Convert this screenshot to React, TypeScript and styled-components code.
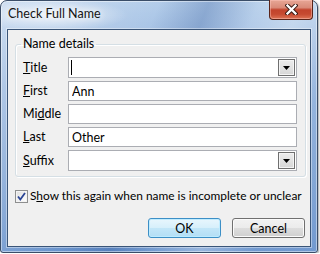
import styled, { createGlobalStyle } from 'styled-components'

const GlobalStyle = createGlobalStyle`
  html, body {
    margin: 0;
    padding: 0;
    background: #ffffff;
  }
  body {
    font-family: Lato, 'Noto Sans', sans-serif;
    font-size: 12px;
    color: #000;
  }
`

type Field = {
  label: string
  key: number
  value?: string
  combo?: boolean
  caret?: boolean
}

const fields: Field[] = [
  { label: 'Title', key: 0, combo: true, caret: true },
  { label: 'First', key: 0, value: 'Ann' },
  { label: 'Middle', key: 2 },
  { label: 'Last', key: 0, value: 'Other' },
  { label: 'Suffix', key: 0, combo: true },
]

function AccessKey({ text, at }: { text: string; at: number }) {
  return (
    <>
      {text.slice(0, at)}
      <u>{text[at]}</u>
      {text.slice(at + 1)}
    </>
  )
}

export default function App() {
  return (
    <>
      <GlobalStyle />
      <Window>
        <TitleBar>
          <Caption>Check Full Name</Caption>
          <CloseButton>
            <svg width="13" height="11" viewBox="0 0 13 11">
              <path d="M2.5 1.5 L10.5 9.5 M10.5 1.5 L2.5 9.5" stroke="#3a1a14" strokeWidth="4.2" strokeLinecap="square" />
              <path d="M2.5 1.5 L10.5 9.5 M10.5 1.5 L2.5 9.5" stroke="#ffffff" strokeWidth="2.3" strokeLinecap="square" />
            </svg>
          </CloseButton>
        </TitleBar>
        <Client>
          <Group>
            <Legend>Name details</Legend>
            <Grid>
              {fields.map((f) => (
                <Row key={f.label}>
                  <Label>
                    <AccessKey text={f.label} at={f.key} />
                  </Label>
                  {f.combo ? (
                    <Combo>
                      <ComboText>{f.caret && <Caret />}</ComboText>
                      <DropButton>
                        <svg width="7" height="4" viewBox="0 0 7 4">
                          <polygon points="0,0 7,0 3.5,4" fill="#000" />
                        </svg>
                      </DropButton>
                    </Combo>
                  ) : (
                    <TextBox readOnly defaultValue={f.value ?? ''} />
                  )}
                </Row>
              ))}
            </Grid>
          </Group>
          <CheckRow>
            <CheckBox>
              <svg width="11" height="11" viewBox="0 0 11 11">
                <path d="M2 5.5 L4.3 8.5 L9 2" fill="none" stroke="#2b4595" strokeWidth="1.8" />
              </svg>
            </CheckBox>
            <CheckText>
              <AccessKey text="Show this again when name is incomplete or unclear" at={1} />
            </CheckText>
          </CheckRow>
          <Buttons>
            <Button $primary>OK</Button>
            <Button>Cancel</Button>
          </Buttons>
        </Client>
      </Window>
    </>
  )
}

const Window = styled.div`
  box-sizing: border-box;
  width: 318px;
  height: 253px;
  display: flex;
  flex-direction: column;
  padding: 0 6px 5px 6px;
  border: 1px solid #3a4d68;
  border-radius: 7px 7px 3px 3px;
  box-shadow: inset 0 0 0 1px rgba(255, 255, 255, 0.45), 1px 1px 2px rgba(0, 0, 0, 0.35);
  background:
    radial-gradient(ellipse 75px 16px at 52px 14px, rgba(255, 255, 255, 0.75), rgba(255, 255, 255, 0)),
    linear-gradient(112deg, rgba(255, 255, 255, 0.35) 0%, rgba(255, 255, 255, 0) 38%, rgba(30, 70, 140, 0.25) 50%, rgba(255, 255, 255, 0.1) 62%, rgba(255, 255, 255, 0.3) 72%, rgba(255, 255, 255, 0.05) 85%),
    linear-gradient(to bottom, #b4cdea 0%, #92b3dd 35%, #7ea3d4 70%, #6a94cd 100%);
`

const TitleBar = styled.div`
  height: 28px;
  display: flex;
  align-items: flex-start;
  justify-content: space-between;
`

const Caption = styled.span`
  margin-top: 5px;
  padding-left: 1px;
  font-size: 12.5px;
  line-height: 16px;
  color: #141414;
  text-shadow: 0 0 6px rgba(255, 255, 255, 0.9), 0 0 10px rgba(255, 255, 255, 0.7);
`

const CloseButton = styled.div`
  box-sizing: border-box;
  width: 44px;
  height: 20px;
  margin: -1px -2px 0 0;
  display: flex;
  align-items: center;
  justify-content: center;
  border: 1px solid #5a2419;
  border-top: none;
  border-radius: 0 0 4px 4px;
  box-shadow: inset 0 0 0 1px rgba(255, 200, 190, 0.45);
  background: linear-gradient(to bottom, #e7a796 0%, #d98a78 40%, #c2432c 52%, #c64a31 75%, #dd7456 100%);
`

const Client = styled.div`
  flex: 1;
  display: flex;
  flex-direction: column;
  padding: 6px 4px 0 7px;
  background: #f0f0f0;
  border: 1px solid #3a5578;
  box-shadow: 0 0 0 1px rgba(255, 255, 255, 0.4);
`

const Group = styled.fieldset`
  margin: 0;
  padding: 5px 8px 5px 7px;
  border: 1px solid #d5dfe5;
  border-radius: 3px;
  box-shadow: inset 1px 1px 0 #ffffff, 1px 1px 0 #ffffff;
`

const Legend = styled.legend`
  margin-left: -2px;
  padding: 0 2px;
  line-height: 16px;
  font-size: 12.5px;
`

const Grid = styled.div`
  display: grid;
  row-gap: 3px;
`

const Row = styled.div`
  display: grid;
  grid-template-columns: 45px 1fr;
  align-items: center;
`

const Label = styled.span`
  line-height: 16px;
  font-size: 12.5px;
`

const TextBox = styled.input`
  box-sizing: border-box;
  width: 100%;
  height: 20px;
  margin: 0;
  padding: 0 3px;
  border: 1px solid #abadb3;
  background: #fff;
  font: inherit;
  font-size: 12.5px;
  color: #000;
  outline: none;
`

const Combo = styled.div`
  box-sizing: border-box;
  height: 21px;
  display: flex;
  padding: 1px;
  border: 1px solid #abadb3;
  background: #fff;
`

const ComboText = styled.div`
  flex: 1;
  display: flex;
  align-items: center;
  padding-left: 1px;
`

const Caret = styled.span`
  width: 1px;
  height: 15px;
  background: #000;
`

const DropButton = styled.div`
  box-sizing: border-box;
  width: 17px;
  display: flex;
  align-items: center;
  justify-content: center;
  border: 1px solid #6f6f6f;
  box-shadow: inset 0 0 0 1px #f4f4f4;
  background: linear-gradient(to bottom, #ececec 0%, #e2e2e2 50%, #d6d6d6 100%);
`

const CheckRow = styled.div`
  display: flex;
  align-items: center;
  gap: 2px;
  margin-top: 11px;
  line-height: 16px;
`

const CheckBox = styled.span`
  box-sizing: border-box;
  width: 13px;
  height: 13px;
  flex: none;
  display: flex;
  align-items: center;
  justify-content: center;
  border: 1px solid #8e8f8f;
  box-shadow: inset 0 0 0 1px #f4f4f4;
  background: linear-gradient(135deg, #dcdcdc 0%, #f4f4f4 60%, #ffffff 100%);
`

const CheckText = styled.span`
  white-space: nowrap;
  font-size: 11.9px;
`

const Buttons = styled.div`
  display: flex;
  justify-content: flex-end;
  gap: 11px;
  margin-top: 14px;
  margin-right: 1px;
`

const Button = styled.button<{ $primary?: boolean }>`
  box-sizing: border-box;
  width: 73px;
  height: 20px;
  padding: 0;
  font: inherit;
  font-size: 12.5px;
  color: #000;
  border-radius: 3px;
  border: 1px solid ${(p) => (p.$primary ? '#3c8fc6' : '#707070')};
  box-shadow: inset 0 0 0 1px ${(p) => (p.$primary ? 'rgba(190, 235, 255, 0.95)' : '#fbfbfb')};
  background: ${(p) =>
    p.$primary
      ? 'linear-gradient(to bottom, #e8f6fd 0%, #d6effb 50%, #c2e6f8 52%, #b3def5 100%)'
      : 'linear-gradient(to bottom, #f2f2f2 0%, #ebebeb 50%, #dddddd 52%, #cfcfcf 100%)'};
`
